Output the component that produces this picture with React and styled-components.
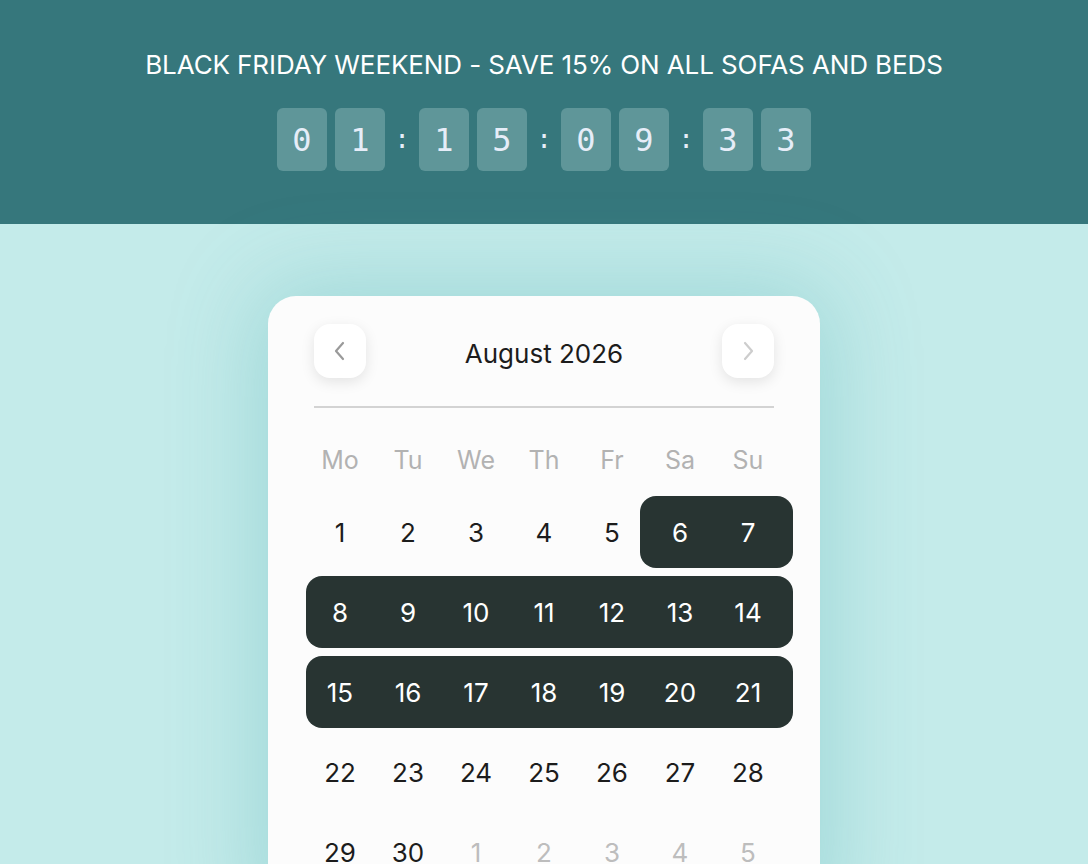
import React from 'react';
import styled, { createGlobalStyle } from 'styled-components';

const GlobalStyle = createGlobalStyle`
  html, body {
    margin: 0;
    padding: 0;
    background: #c4ebea;
    font-family: Inter, "Noto Sans", sans-serif;
  }
  * {
    box-sizing: border-box;
  }
`;

const Page = styled.div`
  min-height: 864px;
  overflow: hidden;
`;

const Banner = styled.header`
  height: 224px;
  background: #36777c;
  padding-top: 50px;
  display: flex;
  flex-direction: column;
  align-items: center;
`;

const BannerTitle = styled.h1`
  margin: 0;
  font-size: 26px;
  line-height: 30px;
  font-weight: 400;
  color: #ffffff;
  letter-spacing: -0.1px;
`;

const Countdown = styled.div`
  margin-top: 28px;
  display: flex;
  gap: 8px;
  align-items: center;
`;

const Digit = styled.span`
  width: 50px;
  height: 63px;
  border-radius: 6px;
  background: #5f9699;
  color: #e6edf8;
  font-family: "DejaVu Sans Mono", monospace;
  font-size: 32px;
  display: flex;
  align-items: center;
  justify-content: center;
`;

const Colon = styled.span`
  width: 18px;
  text-align: center;
  color: #e6edf8;
  font-family: "DejaVu Sans Mono", monospace;
  font-size: 26px;
  line-height: 63px;
`;

const Stage = styled.main`
  display: flex;
  justify-content: center;
  padding-top: 72px;
`;

const Card = styled.section`
  width: 552px;
  background: #fcfcfc;
  border-radius: 28px;
  padding: 28px 46px 40px;
  box-shadow: 0 0 90px 10px rgba(60, 165, 170, 0.28);
`;

const Header = styled.div`
  display: flex;
  align-items: center;
  justify-content: space-between;
`;

const NavButton = styled.button`
  width: 52px;
  height: 54px;
  border: none;
  border-radius: 16px;
  background: #ffffff;
  box-shadow: 0 4px 14px rgba(0, 0, 0, 0.1);
  display: flex;
  align-items: center;
  justify-content: center;
  padding: 0;
  color: ${p => (p.$muted ? '#cdcdcd' : '#9a9a9a')};
`;

const MonthTitle = styled.h2`
  margin: 4px 0 0;
  font-size: 26px;
  font-weight: 400;
  color: #1c1c1c;
`;

const Divider = styled.hr`
  margin: 28px 0 0;
  border: none;
  height: 2px;
  background: #d3d3d3;
`;

const Weekdays = styled.div`
  margin: 34px -8px 18px;
  display: grid;
  grid-template-columns: repeat(7, 68px);
`;

const Weekday = styled.span`
  text-align: center;
  font-size: 25px;
  line-height: 36px;
  color: #b2b2b2;
`;

const Weeks = styled.div`
  margin: 0 -8px;
  display: flex;
  flex-direction: column;
  gap: 8px;
`;

const Week = styled.div`
  display: grid;
  grid-template-columns: repeat(7, 68px);
  grid-template-rows: 72px;
`;

const Range = styled.div`
  grid-row: 1;
  grid-column: ${p => p.$from} / ${p => p.$to + 1};
  margin-left: ${p => (p.$from === 1 ? 0 : -6)}px;
  margin-right: -11px;
  background: #283432;
  border-radius: 16px;
`;

const Day = styled.span`
  grid-row: 1;
  grid-column: ${p => p.$col};
  z-index: 1;
  display: flex;
  align-items: center;
  justify-content: center;
  font-size: 26px;
  color: ${p => (p.$selected ? '#ffffff' : p.$outside ? '#bdbdbd' : '#1c1c1c')};
`;

const Chevron = ({ dir }) => (
  <svg width="14" height="22" viewBox="0 0 14 22" fill="none">
    <path
      d={dir === 'left' ? 'M10 3 L3 11 L10 19' : 'M4 3 L11 11 L4 19'}
      stroke="currentColor"
      strokeWidth="2.2"
      strokeLinecap="round"
      strokeLinejoin="round"
    />
  </svg>
);

const weekdays = ['Mo', 'Tu', 'We', 'Th', 'Fr', 'Sa', 'Su'];

const selected = day => day >= 6 && day <= 21;

const buildWeeks = () => {
  const weeks = [];
  let day = 1;
  for (let w = 0; w < 5; w++) {
    const cells = [];
    for (let c = 0; c < 7; c++) {
      if (day <= 30) {
        cells.push({ label: day, selected: selected(day), outside: false });
      } else {
        cells.push({ label: day - 30, selected: false, outside: true });
      }
      day++;
    }
    weeks.push(cells);
  }
  return weeks;
};

const rangeFor = cells => {
  const idx = cells.map((c, i) => (c.selected ? i + 1 : 0)).filter(Boolean);
  if (!idx.length) return null;
  return { from: idx[0], to: idx[idx.length - 1] };
};

const time = ['01', '15', '09', '33'];

export default function App() {
  const weeks = buildWeeks();

  return (
    <Page>
      <GlobalStyle />
      <Banner>
        <BannerTitle>BLACK FRIDAY WEEKEND - SAVE 15% ON ALL SOFAS AND BEDS</BannerTitle>
        <Countdown>
          {time.map((pair, i) => (
            <React.Fragment key={i}>
              {i > 0 && <Colon>:</Colon>}
              <Digit>{pair[0]}</Digit>
              <Digit>{pair[1]}</Digit>
            </React.Fragment>
          ))}
        </Countdown>
      </Banner>
      <Stage>
        <Card>
          <Header>
            <NavButton aria-label="Previous month">
              <Chevron dir="left" />
            </NavButton>
            <MonthTitle>August 2026</MonthTitle>
            <NavButton $muted aria-label="Next month">
              <Chevron dir="right" />
            </NavButton>
          </Header>
          <Divider />
          <Weekdays>
            {weekdays.map(d => (
              <Weekday key={d}>{d}</Weekday>
            ))}
          </Weekdays>
          <Weeks>
            {weeks.map((cells, w) => {
              const range = rangeFor(cells);
              return (
                <Week key={w}>
                  {range && <Range $from={range.from} $to={range.to} />}
                  {cells.map((c, i) => (
                    <Day key={i} $col={i + 1} $selected={c.selected} $outside={c.outside}>
                      {c.label}
                    </Day>
                  ))}
                </Week>
              );
            })}
          </Weeks>
        </Card>
      </Stage>
    </Page>
  );
}
